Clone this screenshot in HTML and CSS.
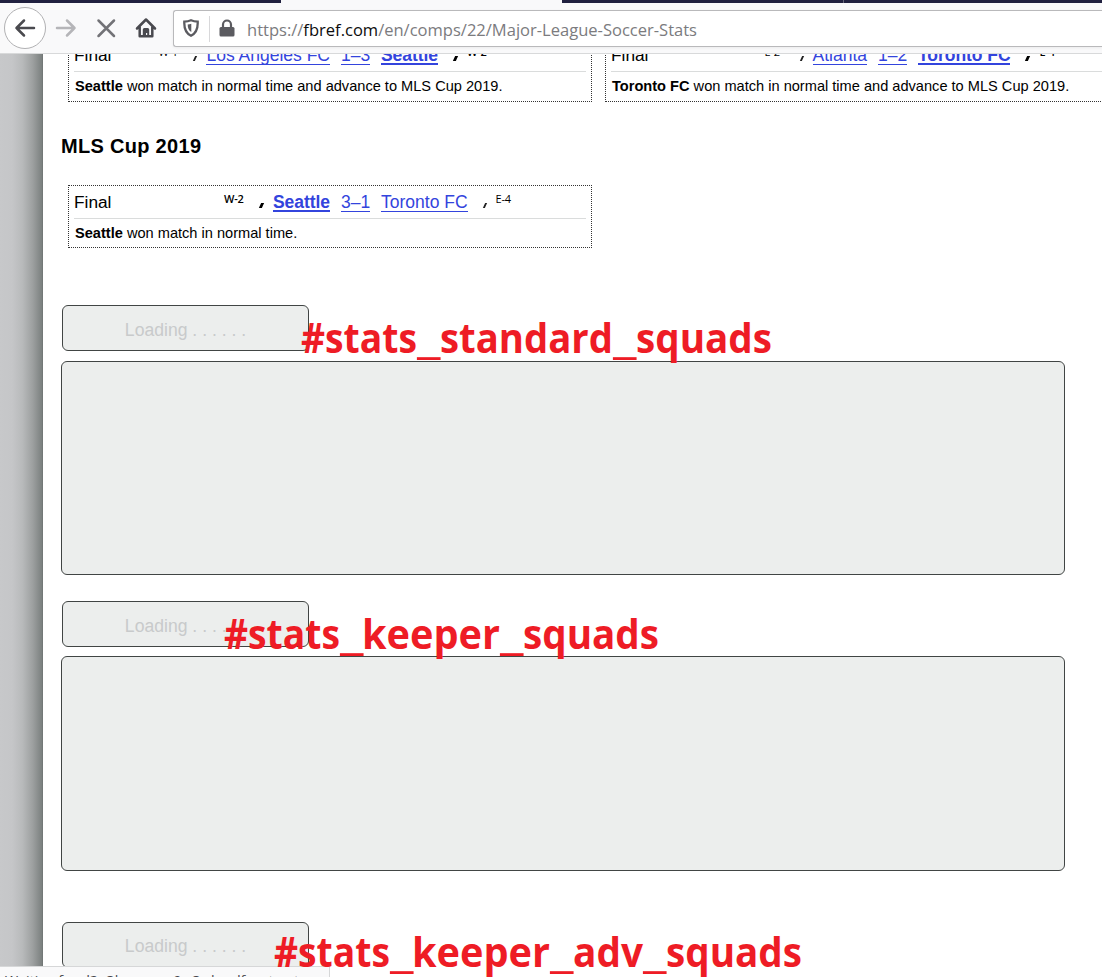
FILE: index.html
```html
<!DOCTYPE html>
<html lang="en">
<head>
<meta charset="utf-8">
<title>Major League Soccer Stats</title>
<link rel="stylesheet" href="styles.css">
</head>
<body>
<div class="browser">
  <div class="tabs"><span class="tab"></span><span class="tab active"></span><span class="tab"></span><span class="tab last"></span></div>
  <header class="toolbar">
    <span class="back"><svg width="42" height="42" viewBox="0 0 42 42"><path d="M30 21H12.500M20 13.500l-7.500 7.500 7.500 7.500" fill="none" stroke="#4a4a4f" stroke-width="2.500" stroke-linecap="round" stroke-linejoin="round"/></svg></span>
    <svg class="forward" width="22" height="22" viewBox="0 0 22 22"><path d="M2 11h17.500M12 3.500l7.500 7.500-7.500 7.500" fill="none" stroke="#b5b5b8" stroke-width="2.500" stroke-linecap="round" stroke-linejoin="round"/></svg>
    <svg class="stop" width="20" height="20" viewBox="0 0 20 20"><path d="M2.500 2.500l15.500 15.500M18 2.500L2.500 18" stroke="#737377" stroke-width="2.500" stroke-linecap="round"/></svg>
    <svg class="home" width="22" height="22" viewBox="0 0 22 22"><path d="M2 11.500L11 2.500l9 9M4.700 10v9.300h12.600V10" fill="none" stroke="#4a4a4f" stroke-width="2.500" stroke-linecap="round" stroke-linejoin="round"/><path d="M7.800 19v-6.500q0-1.500 1.500-1.500h3.400q1.500 0 1.500 1.500V19h-2v-3h-1.200v3z" fill="#4a4a4f"/></svg>
    <div class="address">
      <svg class="shield" width="16" height="18" viewBox="0 0 16 18"><path d="M8 1.300Q11 2.500 14.700 2.700c.3 7-1.700 11.500-6.700 14C3 14.200 1 9.700 1.300 2.700 5 2.500 8 1.300 8 1.300z" fill="none" stroke="#5b5b60" stroke-width="2.300"/><path d="M8.300 4.800v8.200C5.700 11.500 4.700 9 4.700 5.500Q6.500 5.300 8.300 4.800z" fill="#5b5b60"/></svg>
      <span class="divider"></span>
      <svg class="lock" width="16" height="18" viewBox="0 0 16 18"><path d="M4 9V5.500a4 4 0 0 1 8 0V9" fill="none" stroke="#5b5b60" stroke-width="2.200"/><rect x="0.500" y="8" width="15" height="9.500" rx="1.500" fill="#5b5b60"/></svg>
      <svg class="url" width="460" height="26"><text x="0" y="18.500" textLength="450" lengthAdjust="spacingAndGlyphs">https://<tspan class="domain">fbref.com</tspan>/en/comps/22/Major-League-Soccer-Stats</text></svg>
    </div>
  </header>
  <div class="viewport">
    <div class="gutter"></div>
    <main class="page">
      <div class="games scrolled">
        <section class="game">
          <div class="row"><span class="round">Final</span><span class="home-side"><small>W-1</small><i class="mark"></i><a>Los Angeles FC</a></span><a class="score">1–3</a><span class="away-side"><a class="winner">Seattle</a><i class="mark heavy"></i><small class="strong">W-2</small></span></div>
          <p class="note"><b>Seattle</b> won match in normal time and advance to MLS Cup 2019.</p>
        </section>
        <section class="game">
          <div class="row"><span class="round">Final</span><span class="home-side"><small>E-2</small><i class="mark"></i><a>Atlanta</a></span><a class="score">1–2</a><span class="away-side"><a class="winner">Toronto FC</a><i class="mark heavy"></i><small class="strong">E-4</small></span></div>
          <p class="note"><b>Toronto FC</b> won match in normal time and advance to MLS Cup 2019.</p>
        </section>
      </div>
      <h3 class="heading">MLS Cup 2019</h3>
      <div class="games">
        <section class="game">
          <div class="row"><span class="round">Final</span><span class="home-side"><small class="strong">W-2</small><i class="mark heavy"></i><a class="winner">Seattle</a></span><a class="score">3–1</a><span class="away-side"><a>Toronto FC</a><i class="mark"></i><small>E-4</small></span></div>
          <p class="note"><b>Seattle</b> won match in normal time.</p>
        </section>
      </div>
      <div class="placeholder first"><div class="loading">Loading . . . . . .</div><div class="panel"></div></div>
      <div class="placeholder second"><div class="loading">Loading . . . . . .</div><div class="panel"></div></div>
      <div class="placeholder third"><div class="loading">Loading . . . . . .</div></div>
    </main>
  </div>
  <div class="status"><svg width="328" height="20"><text x="5" y="17.500" textLength="305" lengthAdjust="spacingAndGlyphs">Waiting for d2p3bygnnzw9w3.cloudfront.net…</text></svg></div>
  <svg class="annotations" width="1102" height="977">
    <text y="353"><tspan x="301" textLength="116" lengthAdjust="spacingAndGlyphs">#stats</tspan><tspan x="417" textLength="23.500" lengthAdjust="spacingAndGlyphs">_</tspan><tspan x="440" textLength="173" lengthAdjust="spacingAndGlyphs">standard</tspan><tspan x="613" textLength="23.500" lengthAdjust="spacingAndGlyphs">_</tspan><tspan x="636" textLength="136" lengthAdjust="spacingAndGlyphs">squads</tspan></text>
    <text y="649"><tspan x="224" textLength="116" lengthAdjust="spacingAndGlyphs">#stats</tspan><tspan x="340" textLength="23.500" lengthAdjust="spacingAndGlyphs">_</tspan><tspan x="362" textLength="138" lengthAdjust="spacingAndGlyphs">keeper</tspan><tspan x="500" textLength="23.500" lengthAdjust="spacingAndGlyphs">_</tspan><tspan x="523" textLength="136" lengthAdjust="spacingAndGlyphs">squads</tspan></text>
    <text y="967"><tspan x="274" textLength="116" lengthAdjust="spacingAndGlyphs">#stats</tspan><tspan x="390" textLength="23.500" lengthAdjust="spacingAndGlyphs">_</tspan><tspan x="412" textLength="138" lengthAdjust="spacingAndGlyphs">keeper</tspan><tspan x="550" textLength="23.500" lengthAdjust="spacingAndGlyphs">_</tspan><tspan x="573" textLength="70" lengthAdjust="spacingAndGlyphs">adv</tspan><tspan x="643" textLength="23.500" lengthAdjust="spacingAndGlyphs">_</tspan><tspan x="666" textLength="136" lengthAdjust="spacingAndGlyphs">squads</tspan></text>
  </svg>
</div>
</body>
</html>
```
FILE: styles.css
```css
* { box-sizing: border-box; }
body { margin: 0; overflow: hidden; background: #fff; color: #000; font-family: "Liberation Sans", Arial, sans-serif; }
.browser { position: relative; width: 1102px; height: 977px; overflow: hidden; display: flex; flex-direction: column; }
.tabs { height: 3px; flex: none; display: grid; grid-template-columns: 281px 281px 281px 1fr; }
.tab { background: #20203f; }
.tab.active { background: #f9f9fa; }
.tab.last { border-left: 1px solid #65657a; }
.toolbar { height: 51px; flex: none; display: flex; align-items: center; background: #f9f9fa; border-bottom: 1px solid #d8d9da; }
.toolbar svg { display: block; flex: none; }
.back { width: 42px; height: 42px; margin-left: 4px; border: 1px solid #b1b1b3; border-radius: 50%; background: #fff; flex: none; }
.back svg { margin: -1px; }
.forward { margin-left: 9px; }
.stop { margin-left: 19px; }
.home { margin-left: 19px; }
.address { align-self: flex-start; flex: 1; height: 37px; margin: 7px 0 0 16px; display: flex; align-items: center; border: 1px solid #b9b9bb; border-right: 0; border-radius: 3px 0 0 3px; background: #fff; box-shadow: 0 1px 3px rgba(0,0,0,.06); }
.shield { margin: 0 0 2px 9px; }
.divider { width: 1px; height: 26px; margin-left: 10px; background: #d8d8da; }
.lock { margin: 0 0 2px 9px; }
.url { margin: 2px 0 0 12px; font: 16px "Open Sans", "Noto Sans", sans-serif; fill: #7b7b7e; }
.domain { fill: #0c0c0d; }
.viewport { flex: 1; min-height: 0; display: flex; overflow: hidden; }
.gutter { width: 43px; flex: none; background: linear-gradient(90deg, #c7c8ca 0, #c5c6c8 28%, #b8babb 52%, #9da0a0 76%, #7c8180 97%, #6d7271 100%); }
.page { width: 1059px; flex: none; padding-left: 18px; overflow: hidden; }
.games { display: flex; gap: 13px; padding-left: 7px; }
.games.scrolled { margin-top: -16px; }
.game { width: 524px; height: 63px; flex: none; padding: 0 5px; border: 1px dotted #333; }
.scrolled .game { height: 64px; }
.row { height: 33px; display: flex; align-items: center; border-bottom: 1px solid #dadcdc; font-size: 17.500px; white-space: nowrap; }
.round { width: 40px; font-size: 17.300px; }
.home-side { width: 216px; display: flex; align-items: center; justify-content: flex-end; }
.away-side { display: flex; align-items: center; margin-left: 11px; }
.row a { color: #3344dd; line-height: 21px; height: 20px; border-bottom: 1px solid #3344dd; }
.row a.winner { font-weight: bold; border-bottom-width: 2px; letter-spacing: -.05px; }
.score { width: 29px; margin-left: 11px; }
.row small { font: 11px/12px "Open Sans", sans-serif; width: 20px; margin-top: -6px; letter-spacing: -.2px; }
.row small.strong { font-weight: 600; }
.mark { width: 2px; height: 5px; margin-top: 6px; background: #222; transform: skewX(-24deg); }
.mark.heavy { width: 3px; background: #000; }
.home-side .mark { margin-left: 16px; margin-right: 10px; }
.away-side .mark { margin-left: 16px; margin-right: 10px; }
.note { margin: 0; padding: 6px 1px; font-size: 14.600px; line-height: 17px; white-space: nowrap; }
.heading { margin: 32px 0 27px; font-size: 20px; line-height: 24px; letter-spacing: .3px; }
.placeholder { display: flex; flex-direction: column; }
.loading { width: 247px; height: 46px; margin-left: 1px; border: 1px solid #414544; border-radius: 6px; background: #eceeed; color: #c8cacb; font-size: 17.600px; line-height: 48px; text-align: center; }
.panel { width: 1004px; height: 214px; margin-top: 10px; border: 1px solid #414544; border-radius: 6px; background: #eceeed; }
.first { margin-top: 57px; }
.second { margin-top: 26px; }
.second .panel { margin-top: 9px; height: 215px; }
.third { margin-top: 51px; }
.third .loading { line-height: 46px; }
.status { position: absolute; left: 0; bottom: 0; width: 330px; height: 11px; overflow: hidden; border-top: 1px solid #d6d7d8; border-right: 1px solid #d6d7d8; background: #f9f9fa; font: 12px "Open Sans", sans-serif; fill: #46464a; }
.status svg { display: block; }
.annotations { position: absolute; left: 0; top: 0; font: bold 42px "Open Sans", "Noto Sans", sans-serif; fill: #ee1c25; }
```
